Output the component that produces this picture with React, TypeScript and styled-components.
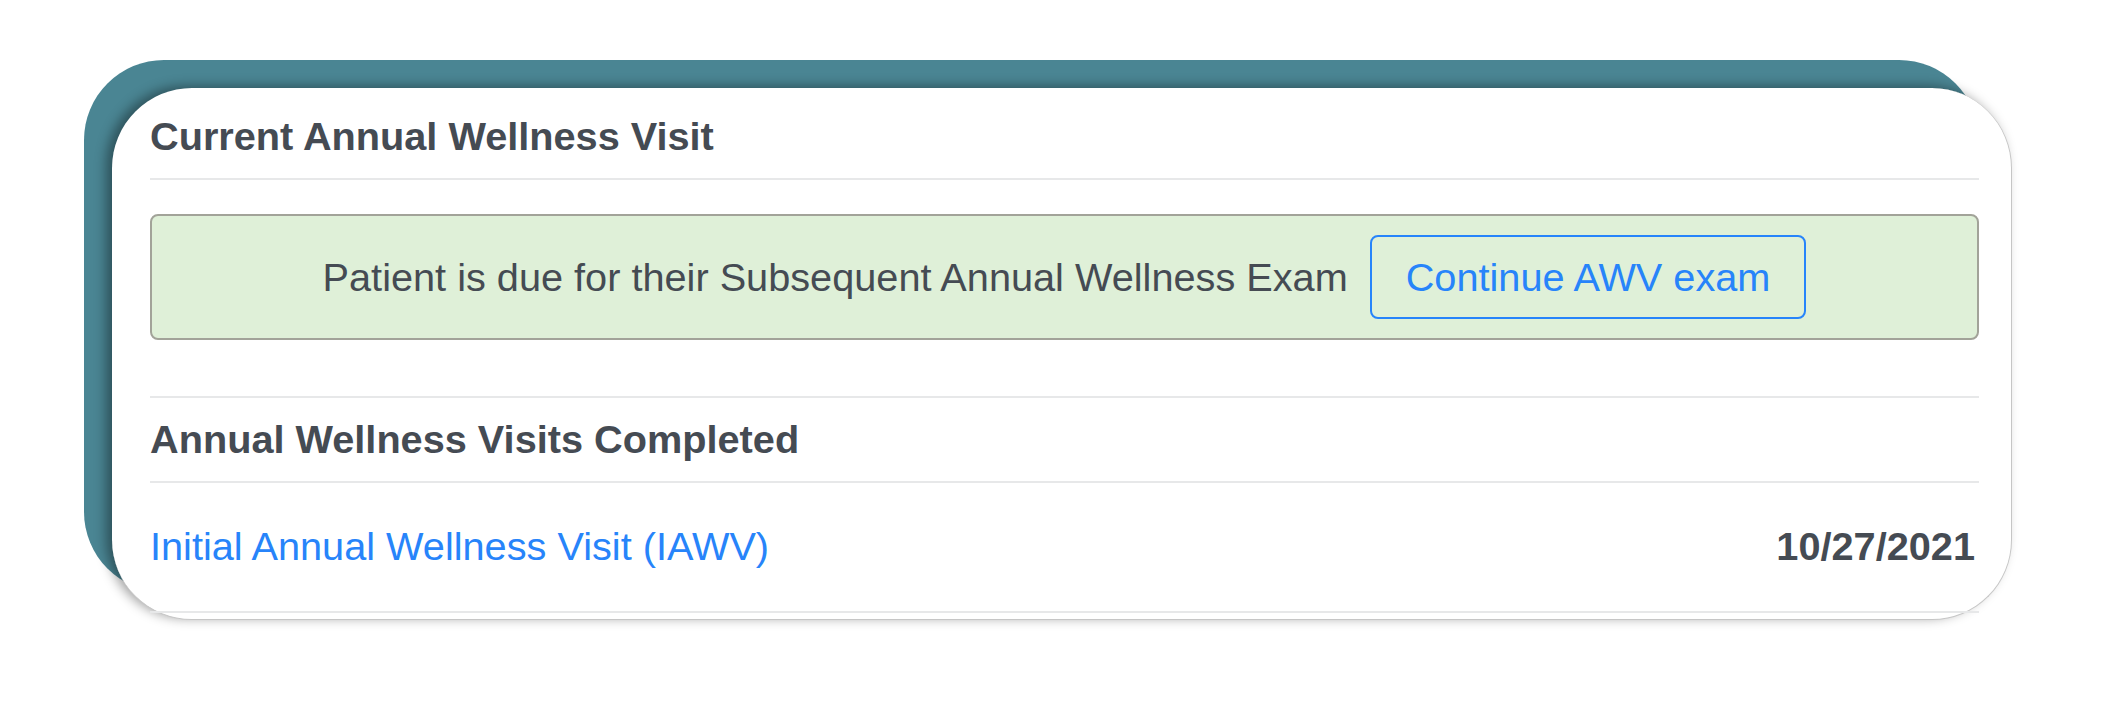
import React from "react";
import styled, { createGlobalStyle, css } from "styled-components";

const GlobalStyle = createGlobalStyle`
  html, body {
    margin: 0;
    padding: 0;
    background: #ffffff;
  }
  body {
    font-family: "Liberation Sans", Arial, Helvetica, sans-serif;
  }
  *, *::before, *::after {
    box-sizing: border-box;
  }
`;

const Stage = styled.main`
  width: 2124px;
  height: 708px;
  padding: 88px 0 0 112px;
  overflow: hidden;
`;

const Frame = styled.div`
  position: relative;
  width: 1900px;

  &::before {
    content: "";
    position: absolute;
    top: -28px;
    left: -28px;
    right: 33px;
    bottom: 28px;
    border-radius: 80px;
    background: #4a8593;
  }
`;

const Card = styled.section`
  position: relative;
  z-index: 1;
  background: #ffffff;
  border-radius: 80px;
  border-right: 1px solid #c6c6c6;
  border-bottom: 1px solid #c6c6c6;
  box-shadow: -6px -2px 12px rgba(0, 0, 0, 0.38);
  padding: 25px 32px 6px 38px;
`;

const rule = "2px solid #e7e8e9";
const textSize = "39.7px";

const SectionTitle = styled.h2<{ $ruledAbove?: boolean }>`
  margin: 0;
  font-size: ${textSize};
  line-height: 46px;
  font-weight: 700;
  color: #454b53;
  padding: 0 0 19px;
  border-bottom: ${rule};
  ${(p) =>
    p.$ruledAbove &&
    css`
      margin-top: 56px;
      padding-top: 18px;
      border-top: ${rule};
    `}
`;

const DueNotice = styled.div`
  margin-top: 34px;
  display: flex;
  align-items: center;
  justify-content: center;
  gap: 22px;
  padding: 19px;
  background: #dff0d8;
  border: 2px solid #a2a399;
  border-radius: 8px;
  font-size: ${textSize};
  line-height: 46px;
  color: #454b53;
`;

const OutlineButton = styled.button`
  font-family: inherit;
  font-size: ${textSize};
  line-height: 46px;
  color: #2784fa;
  background: transparent;
  border: 2px solid #2784fa;
  border-radius: 8px;
  padding: 17px 34px;
  cursor: pointer;
`;

const VisitRow = styled.div`
  display: flex;
  justify-content: space-between;
  align-items: baseline;
  padding: 40px 4px 42px 0;
  border-bottom: ${rule};
  font-size: ${textSize};
  line-height: 46px;
`;

const VisitLink = styled.a`
  color: #2784fa;
  text-decoration: none;
`;

const VisitDate = styled.span`
  font-weight: 700;
  color: #454b53;
`;

export default function App() {
  return (
    <>
      <GlobalStyle />
      <Stage>
        <Frame>
          <Card>
            <SectionTitle>Current Annual Wellness Visit</SectionTitle>
            <DueNotice>
              <span>Patient is due for their Subsequent Annual Wellness Exam</span>
              <OutlineButton type="button">Continue AWV exam</OutlineButton>
            </DueNotice>
            <SectionTitle $ruledAbove>Annual Wellness Visits Completed</SectionTitle>
            <VisitRow>
              <VisitLink href="#">Initial Annual Wellness Visit (IAWV)</VisitLink>
              <VisitDate>10/27/2021</VisitDate>
            </VisitRow>
          </Card>
        </Frame>
      </Stage>
    </>
  );
}
